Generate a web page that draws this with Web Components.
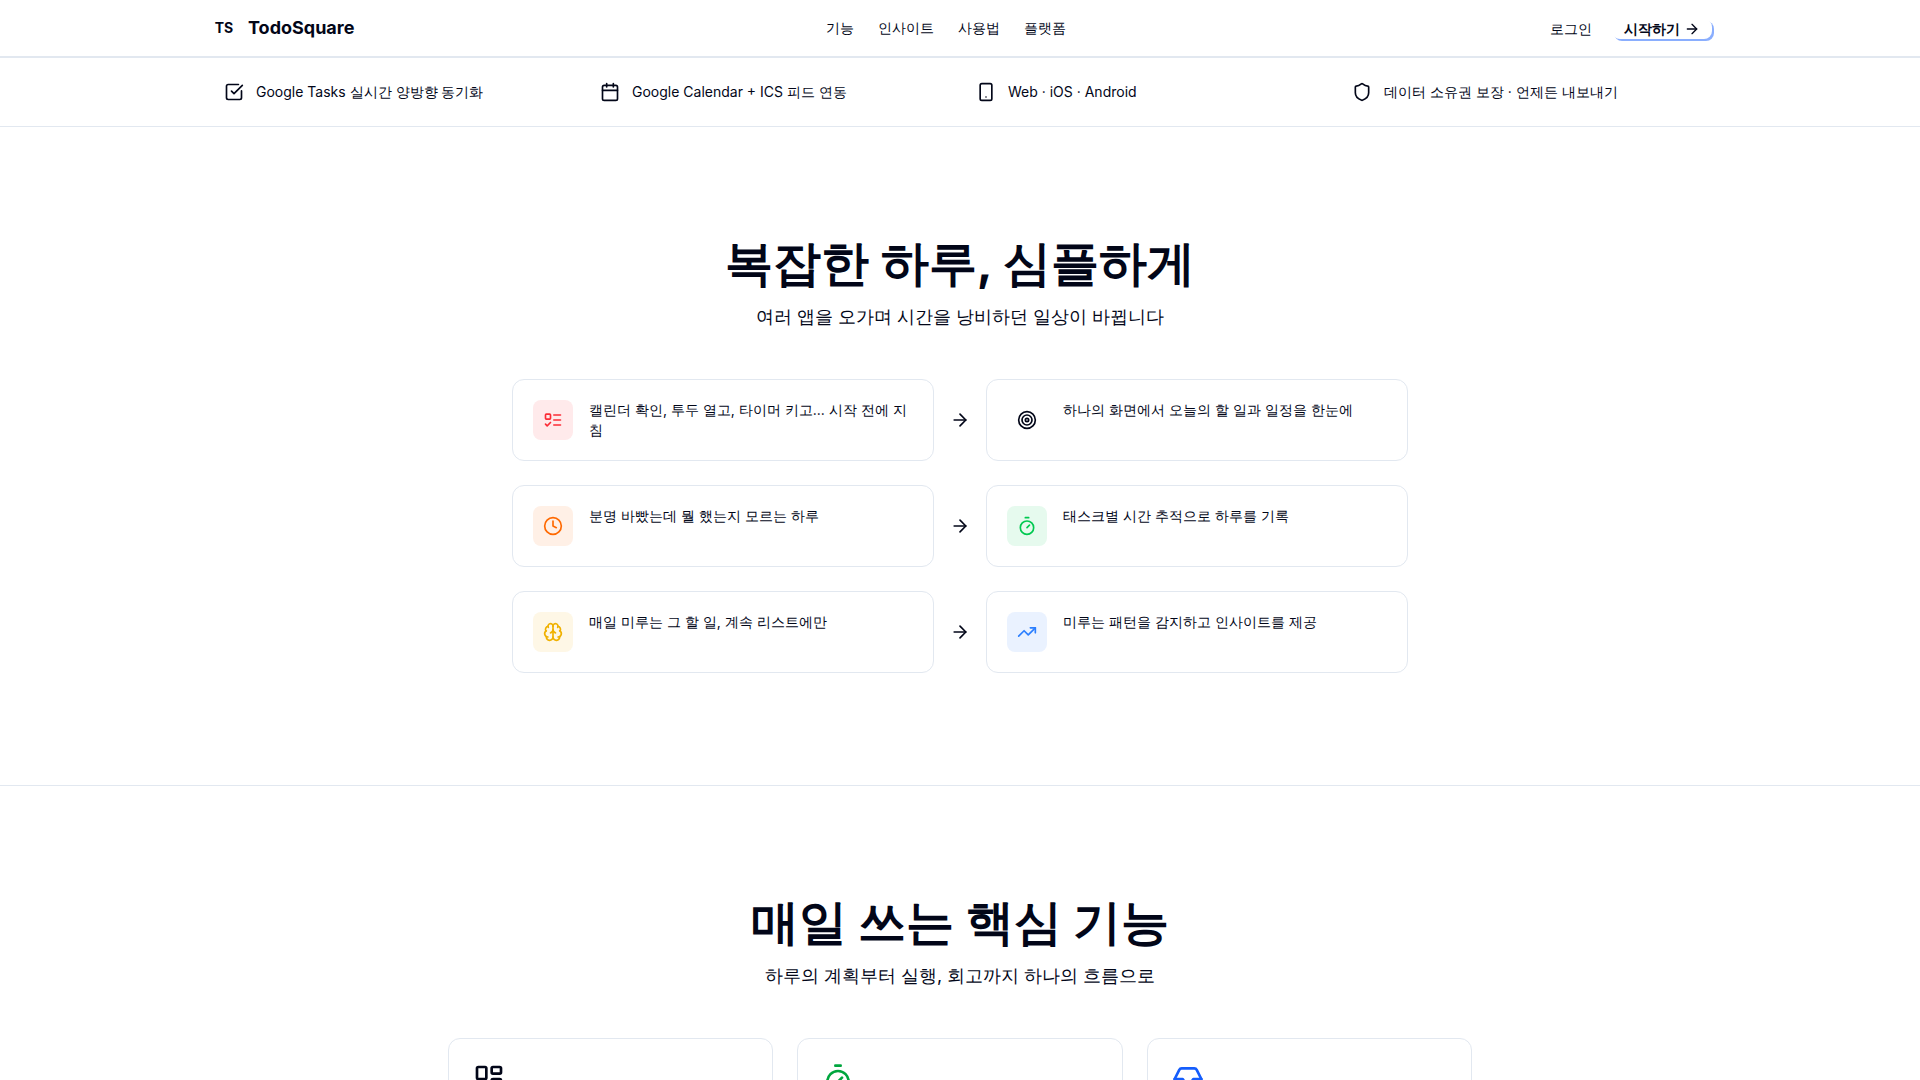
<!DOCTYPE html>
<html lang="ko">
<head>
    <meta charset="UTF-8">
    <meta name="viewport" content="width=device-width, initial-scale=1.0">
    <title>TodoSquare</title>
    <style>
        body {
            margin: 0;
            height: 100vh;
            overflow: hidden;
            background-color: #fff;
            color: #020618;
            font-family: Inter, sans-serif;
            font-size: 14px;
            line-height: 20px;
            --border: #e2e8f0;
        }
    </style>
</head>
<body>
    <site-header></site-header>
    <main>
        <highlight-bar>
            <highlight-item icon="check">Google Tasks 실시간 양방향 동기화</highlight-item>
            <highlight-item icon="calendar">Google Calendar + ICS 피드 연동</highlight-item>
            <highlight-item icon="phone">Web · iOS · Android</highlight-item>
            <highlight-item icon="shield">데이터 소유권 보장 · 언제든 내보내기</highlight-item>
        </highlight-bar>

        <page-section>
            <span slot="title">복잡한 하루, 심플하게</span>
            <span slot="subtitle">여러 앱을 오가며 시간을 낭비하던 일상이 바뀝니다</span>
            <compare-list>
                <compare-row>
                    <compare-card slot="before" icon="todo" tone="red">캘린더 확인, 투두 열고, 타이머 키고... 시작 전에 지침</compare-card>
                    <compare-card slot="after" icon="target">하나의 화면에서 오늘의 할 일과 일정을 한눈에</compare-card>
                </compare-row>
                <compare-row>
                    <compare-card slot="before" icon="clock" tone="orange">분명 바빴는데 뭘 했는지 모르는 하루</compare-card>
                    <compare-card slot="after" icon="timer" tone="green">태스크별 시간 추적으로 하루를 기록</compare-card>
                </compare-row>
                <compare-row>
                    <compare-card slot="before" icon="brain" tone="yellow">매일 미루는 그 할 일, 계속 리스트에만</compare-card>
                    <compare-card slot="after" icon="trend" tone="blue">미루는 패턴을 감지하고 인사이트를 제공</compare-card>
                </compare-row>
            </compare-list>
        </page-section>

        <page-section>
            <span slot="title">매일 쓰는 핵심 기능</span>
            <span slot="subtitle">하루의 계획부터 실행, 회고까지 하나의 흐름으로</span>
            <feature-grid>
                <feature-card icon="dashboard"></feature-card>
                <feature-card icon="timer" tone="green"></feature-card>
                <feature-card icon="inbox" tone="blue"></feature-card>
            </feature-grid>
        </page-section>
    </main>

    <script>
        const ICONS = {
            arrow: '<path d="M5 12h14"/><path d="m12 5 7 7-7 7"/>',
            check: '<path d="M21 10.656V19a2 2 0 0 1-2 2H5a2 2 0 0 1-2-2V5a2 2 0 0 1 2-2h12.344"/><path d="m9 11 3 3L22 4"/>',
            calendar: '<path d="M8 2v4"/><path d="M16 2v4"/><rect width="18" height="18" x="3" y="4" rx="2"/><path d="M3 10h18"/>',
            phone: '<rect width="14" height="20" x="5" y="2" rx="2"/><path d="M12 18h.01"/>',
            shield: '<path d="M20 13c0 5-3.5 7.5-7.66 8.95a1 1 0 0 1-.67-.01C7.5 20.5 4 18 4 13V6a1 1 0 0 1 1-1c2 0 4.5-1.2 6.24-2.72a1.17 1.17 0 0 1 1.52 0C14.51 3.81 17 5 19 5a1 1 0 0 1 1 1z"/>',
            todo: '<rect x="3" y="5" width="6" height="6" rx="1"/><path d="m3 17 2 2 4-4"/><path d="M13 6h8"/><path d="M13 12h8"/><path d="M13 18h8"/>',
            target: '<circle cx="12" cy="12" r="10"/><circle cx="12" cy="12" r="6"/><circle cx="12" cy="12" r="2"/>',
            clock: '<circle cx="12" cy="12" r="10"/><path d="M12 6v6l4 2"/>',
            timer: '<path d="M10 2h4"/><path d="m12 14 3-3"/><circle cx="12" cy="14" r="8"/>',
            brain: '<path d="M12 18V5"/><path d="M15 13a4.17 4.17 0 0 1-3-4 4.17 4.17 0 0 1-3 4"/><path d="M17.598 6.5A3 3 0 1 0 12 5a3 3 0 1 0-5.598 1.5"/><path d="M17.997 5.125a4 4 0 0 1 2.526 5.77"/><path d="M18 18a4 4 0 0 0 2-7.464"/><path d="M19.967 17.483A4 4 0 1 1 12 18a4 4 0 1 1-7.967-.517"/><path d="M6 18a4 4 0 0 1-2-7.464"/><path d="M6.003 5.125a4 4 0 0 0-2.526 5.77"/>',
            trend: '<path d="M16 7h6v6"/><path d="m22 7-8.5 8.5-5-5L2 17"/>',
            dashboard: '<rect width="7" height="9" x="3" y="3" rx="1"/><rect width="7" height="5" x="14" y="3" rx="1"/><rect width="7" height="9" x="14" y="12" rx="1"/><rect width="7" height="5" x="3" y="16" rx="1"/>',
            inbox: '<path d="M22 12h-6l-2 3h-4l-2-3H2"/><path d="M5.45 5.11 2 12v6a2 2 0 0 0 2 2h16a2 2 0 0 0 2-2v-6l-3.45-6.89A2 2 0 0 0 16.76 4H7.24a2 2 0 0 0-1.79 1.11z"/>'
        };

        function icon(name, size) {
            return `<svg width="${size}" height="${size}" viewBox="0 0 24 24" fill="none" stroke="currentColor" stroke-width="2" stroke-linecap="round" stroke-linejoin="round" aria-hidden="true">${ICONS[name] || ''}</svg>`;
        }

        class SiteHeader extends HTMLElement {
            constructor() {
                super();
                this.attachShadow({ mode: 'open' });
                this.shadowRoot.innerHTML = `
                    <style>
                        :host {
                            display: block;
                            border-bottom: 2px solid var(--border);
                        }
                        header {
                            box-sizing: border-box;
                            max-width: 1536px;
                            height: 56px;
                            margin: 0 auto;
                            padding: 0 16px;
                            display: flex;
                            align-items: center;
                            justify-content: space-between;
                        }
                        a {
                            color: inherit;
                            text-decoration: none;
                        }
                        .brand {
                            display: flex;
                            align-items: center;
                            gap: 8px;
                            font-size: 18px;
                            font-weight: 700;
                            line-height: 28px;
                        }
                        .mark {
                            width: 32px;
                            text-align: center;
                            font-size: 14px;
                        }
                        nav {
                            display: flex;
                            gap: 24px;
                        }
                        .actions {
                            display: flex;
                            align-items: center;
                            gap: 8px;
                            padding-top: 2px;
                        }
                        .login {
                            padding: 0 12px;
                        }
                        button {
                            display: flex;
                            align-items: center;
                            gap: 4px;
                            padding: 0 12px;
                            border: none;
                            border-radius: 8px;
                            background-color: #fff;
                            box-shadow: 2px 2px 0 #8aaefe;
                            color: inherit;
                            font: inherit;
                            font-weight: 600;
                            cursor: pointer;
                        }
                    </style>
                    <header>
                        <a class="brand" href="#"><span class="mark">TS</span><span>TodoSquare</span></a>
                        <nav>
                            <a href="#features">기능</a>
                            <a href="#insights">인사이트</a>
                            <a href="#how">사용법</a>
                            <a href="#platforms">플랫폼</a>
                        </nav>
                        <div class="actions">
                            <a class="login" href="#login">로그인</a>
                            <button type="button">시작하기 ${icon('arrow', 16)}</button>
                        </div>
                    </header>
                `;
            }
        }

        class HighlightBar extends HTMLElement {
            constructor() {
                super();
                this.attachShadow({ mode: 'open' });
                this.shadowRoot.innerHTML = `
                    <style>
                        :host {
                            display: block;
                            border-bottom: 1px solid var(--border);
                        }
                        .items {
                            box-sizing: border-box;
                            max-width: 1536px;
                            margin: 0 auto;
                            padding: 24px 16px;
                            display: grid;
                            grid-template-columns: repeat(4, 1fr);
                        }
                    </style>
                    <div class="items"><slot></slot></div>
                `;
            }
        }

        class HighlightItem extends HTMLElement {
            constructor() {
                super();
                this.attachShadow({ mode: 'open' });
                this.shadowRoot.innerHTML = `
                    <style>
                        :host {
                            display: flex;
                            align-items: center;
                            gap: 12px;
                            padding: 0 16px;
                        }
                    </style>
                    ${icon(this.getAttribute('icon'), 20)}
                    <span><slot></slot></span>
                `;
            }
        }

        class PageSection extends HTMLElement {
            constructor() {
                super();
                this.attachShadow({ mode: 'open' });
                this.shadowRoot.innerHTML = `
                    <style>
                        :host {
                            display: block;
                            padding: 112px 16px;
                            border-bottom: 1px solid var(--border);
                        }
                        .heading {
                            margin-bottom: 48px;
                            text-align: center;
                        }
                        h2 {
                            margin: 0 0 16px;
                            font-size: 48px;
                            font-weight: 700;
                            line-height: 48px;
                        }
                        p {
                            margin: 0;
                            font-size: 18px;
                            line-height: 28px;
                        }
                    </style>
                    <section>
                        <div class="heading">
                            <h2><slot name="title"></slot></h2>
                            <p><slot name="subtitle"></slot></p>
                        </div>
                        <slot></slot>
                    </section>
                `;
            }
        }

        class CompareList extends HTMLElement {
            constructor() {
                super();
                this.attachShadow({ mode: 'open' });
                this.shadowRoot.innerHTML = `
                    <style>
                        :host {
                            display: grid;
                            gap: 24px;
                            max-width: 896px;
                            margin: 0 auto;
                        }
                    </style>
                    <slot></slot>
                `;
            }
        }

        class CompareRow extends HTMLElement {
            constructor() {
                super();
                this.attachShadow({ mode: 'open' });
                this.shadowRoot.innerHTML = `
                    <style>
                        :host {
                            display: grid;
                            grid-template-columns: 1fr auto 1fr;
                            align-items: center;
                            gap: 16px;
                        }
                    </style>
                    <slot name="before"></slot>
                    ${icon('arrow', 20)}
                    <slot name="after"></slot>
                `;
            }
        }

        class CompareCard extends HTMLElement {
            constructor() {
                super();
                this.attachShadow({ mode: 'open' });
                this.shadowRoot.innerHTML = `
                    <style>
                        :host {
                            display: flex;
                            gap: 16px;
                            padding: 20px;
                            border: 1px solid var(--border);
                            border-radius: 12px;
                        }
                        .tile {
                            flex: none;
                            display: grid;
                            place-items: center;
                            width: 40px;
                            height: 40px;
                            border-radius: 8px;
                        }
                        :host([tone="red"]) .tile { color: #fb2c36; background-color: #ffeaeb; }
                        :host([tone="orange"]) .tile { color: #ff6900; background-color: #fff0e6; }
                        :host([tone="yellow"]) .tile { color: #f0b100; background-color: #fef7e6; }
                        :host([tone="green"]) .tile { color: #00c950; background-color: #e6faee; }
                        :host([tone="blue"]) .tile { color: #2b7fff; background-color: #eaf2ff; }
                    </style>
                    <div class="tile">${icon(this.getAttribute('icon'), 20)}</div>
                    <div><slot></slot></div>
                `;
            }
        }

        class FeatureGrid extends HTMLElement {
            constructor() {
                super();
                this.attachShadow({ mode: 'open' });
                this.shadowRoot.innerHTML = `
                    <style>
                        :host {
                            display: grid;
                            grid-template-columns: repeat(3, 1fr);
                            gap: 24px;
                            max-width: 1024px;
                            margin: 0 auto;
                        }
                    </style>
                    <slot></slot>
                `;
            }
        }

        class FeatureCard extends HTMLElement {
            constructor() {
                super();
                this.attachShadow({ mode: 'open' });
                this.shadowRoot.innerHTML = `
                    <style>
                        :host {
                            display: block;
                            padding: 24px;
                            border: 1px solid var(--border);
                            border-radius: 12px;
                        }
                        :host([tone="green"]) { color: #00a63e; }
                        :host([tone="blue"]) { color: #155dfc; }
                        svg {
                            display: block;
                        }
                    </style>
                    ${icon(this.getAttribute('icon'), 32)}
                    <slot></slot>
                `;
            }
        }

        customElements.define('site-header', SiteHeader);
        customElements.define('highlight-bar', HighlightBar);
        customElements.define('highlight-item', HighlightItem);
        customElements.define('page-section', PageSection);
        customElements.define('compare-list', CompareList);
        customElements.define('compare-row', CompareRow);
        customElements.define('compare-card', CompareCard);
        customElements.define('feature-grid', FeatureGrid);
        customElements.define('feature-card', FeatureCard);
    </script>
</body>
</html>
